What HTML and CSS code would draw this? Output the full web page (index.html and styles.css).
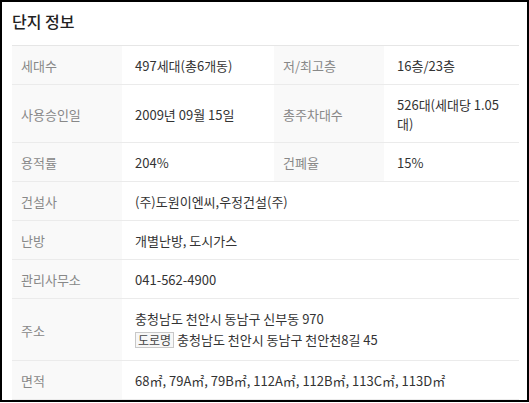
FILE: index.html
```html
<!DOCTYPE html>
<html>
<head>
	<meta charset="UTF-8">
	<title>단지 정보</title>
<link rel="stylesheet" href="styles.css">
</head>
<body>
<div class="box">
	<h2 class="titel">단지 정보</h2>
	<table class="info">
		<colgroup>
			<col class="c-th">
			<col class="c-td1">
			<col class="c-th">
			<col>
		</colgroup>
		<tr>
			<th>세대수</th>
			<td>497세대(총6개동)</td>
			<th>저/최고층</th>
			<td>16층/23층</td>
		</tr>
		<tr>
			<th>사용승인일</th>
			<td>2009년 09월 15일</td>
			<th>총주차대수</th>
			<td>526대(세대당 1.05대)</td>
		</tr>
		<tr>
			<th>용적률</th>
			<td>204%</td>
			<th>건폐율</th>
			<td>15%</td>
		</tr>
		<tr>
			<th>건설사</th>
			<td colspan="3">(주)도원이엔씨,우정건설(주)</td>
		</tr>
		<tr>
			<th>난방</th>
			<td colspan="3">개별난방, 도시가스</td>
		</tr>
		<tr>
			<th>관리사무소</th>
			<td colspan="3">041-562-4900</td>
		</tr>
		<tr>
			<th>주소</th>
			<td colspan="3">
				<div>충청남도 천안시 동남구 신부동 970</div>
				<div class="road"><span class="badge">도로명</span> 충청남도 천안시 동남구 천안천8길 45</div>
			</td>
		</tr>
		<tr>
			<th>면적</th>
			<td colspan="3">68㎡, 79A㎡, 79B㎡, 112A㎡, 112B㎡, 113C㎡, 113D㎡</td>
		</tr>
	</table>
</div>
</body>
</html>
```

FILE: styles.css
```css
html, body {
	margin: 0;
	padding: 0;
	background: #fff;
}
body {
	font-family: "Noto Sans CJK KR", "Noto Sans", sans-serif;
	font-size: 13px;
	color: #333;
}
.box {
	box-sizing: border-box;
	width: 529px;
	height: 402px;
	border: 2px solid #000;
	padding: 0 8px 0 10px;
	overflow: hidden;
}
.titel {
	margin: 0;
	height: 43px;
	line-height: 38px;
	font-size: 16px;
	font-weight: 500;
	color: #222;
}
.info {
	width: 100%;
	border-collapse: collapse;
	border-top: 1px solid #e6e6e6;
}
.c-th {
	width: 110px;
}
.c-td1 {
	width: 152px;
}
.info th, .info td {
	border-bottom: 1px solid #ebebeb;
	padding: 10px 10px 9px 13px;
	line-height: 19px;
	text-align: left;
	vertical-align: middle;
}
.info th {
	background: #f9f9f9;
	color: #888;
	font-weight: normal;
	padding-left: 9px;
}
.road {
	margin-top: 1px;
	line-height: 22px;
}
.badge {
	display: inline-block;
	border: 1px solid #c8c8c8;
	background: #f7f7f7;
	font-size: 12px;
	line-height: 14px;
	padding: 0 2px;
	color: #444;
}
```
